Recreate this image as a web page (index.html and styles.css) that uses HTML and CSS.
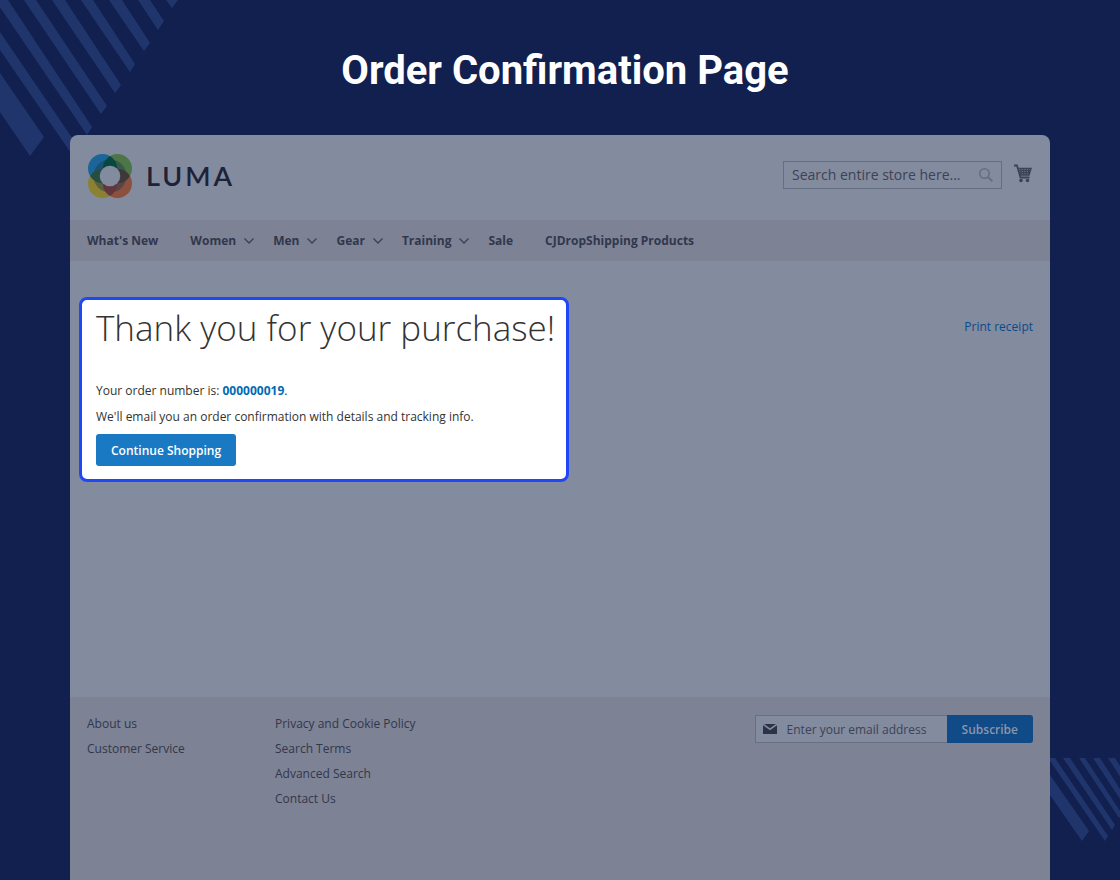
FILE: index.html
```html
<!DOCTYPE html>
<html lang="en">
<head>
    <meta charset="UTF-8">
    <meta name="viewport" content="width=device-width, initial-scale=1.0">
    <title>Order Confirmation Page</title>
    <link rel="stylesheet" href="styles.css">
</head>
<body>

<!-- Corner stripes -->
<svg class="stripes stripes-top" width="180" height="160" viewBox="0 0 180 160" aria-hidden="true">
    <path d="M0 73 44 137 30 156 0 112Z"/>
    <path d="M0 32 79 148 73 156 0 50Z"/>
    <path d="M-5 0H8L92 127 87 135Z"/>
    <path d="M24 0H36L107 106 101 114Z"/>
    <path d="M52 0H65L121 85 115 93Z"/>
    <path d="M81 0H93L135 64 130 72Z"/>
    <path d="M109 0H122L150 43 144 51Z"/>
    <path d="M138 0H150L164 21 158 30Z"/>
    <path d="M166 0H178L172 8Z"/>
</svg>
<svg class="stripes stripes-bottom" width="70" height="84" viewBox="0 0 70 84" aria-hidden="true">
    <path d="M0 17 39 73 32 83 0 37Z"/>
    <path d="M-2 0H5L58 78 55 83Z"/>
    <path d="M13 0H20L65 67 62 72Z"/>
    <path d="M29 0H35L72 56 69 60Z"/>
    <path d="M43 0H50L79 45 76 50Z"/>
    <path d="M58 0H65L85 32 80 34Z"/>
</svg>

<h1 class="page-title">Order Confirmation Page</h1>

<div class="store">
    <header class="header">
        <a class="logo" href="#">
            <svg width="44" height="46" viewBox="0 0 44 46" aria-hidden="true">
                <circle cx="14.5" cy="15.5" r="14.5" fill="#1b6698"/>
                <circle cx="29.5" cy="15.5" r="14.5" fill="#4d7648"/>
                <circle cx="14.5" cy="30.5" r="14.5" fill="#8b8132"/>
                <circle cx="29.5" cy="30.5" r="14.5" fill="#8c503f"/>
                <circle cx="22" cy="23" r="16.5" fill="#1d3550" fill-opacity=".45"/>
                <path d="M22 3A14.5 14.5 0 0 1 22 28A14.5 14.5 0 0 1 22 3" fill="#06483f"/>
                <path d="M2 23A14.5 14.5 0 0 1 27 23A14.5 14.5 0 0 1 2 23" fill="#264d42"/>
                <path d="M17 23A14.5 14.5 0 0 1 42 23A14.5 14.5 0 0 1 17 23" fill="#3f3838"/>
                <path d="M22 18A14.5 14.5 0 0 1 22 43A14.5 14.5 0 0 1 22 18" fill="#63363d"/>
                <circle cx="22" cy="23" r="10.3" fill="#838b9e"/>
            </svg>
            <span class="logo-text">LUMA</span>
        </a>
        <form class="search">
            <input type="search" aria-label="Search" placeholder="Search entire store here...">
            <button class="search-btn" type="button" aria-label="Search">
                <svg width="14" height="14" viewBox="0 0 14 14" fill="none" stroke="#666e83" stroke-width="1.6" aria-hidden="true">
                    <circle cx="5.5" cy="5.5" r="4.7"/>
                    <path d="M9 9 13.3 13.3" stroke-width="2"/>
                </svg>
            </button>
        </form>
        <a class="cart" href="#" aria-label="My Cart">
            <svg width="18" height="19" viewBox="0 0 18 19" fill="none" stroke="#3c4257" aria-hidden="true">
                <path d="M0 1.5H3L6.5 13.5H15.5" stroke-width="1.8"/>
                <path d="M4 4.5H17L15 11H6M4.5 6.6H16M5 8.8H15.5M7 4V11M9.6 4V11M12.2 4V11M14.6 4V11" stroke-width="1.4"/>
                <circle cx="7" cy="16.5" r="1.8" fill="#3c4257" stroke="none"/>
                <circle cx="13.5" cy="16.5" r="1.8" fill="#3c4257" stroke="none"/>
            </svg>
        </a>
    </header>

    <nav class="nav">
        <a href="#">What's New</a>
        <a class="has-menu" href="#">Women</a>
        <a class="has-menu" href="#">Men</a>
        <a class="has-menu" href="#">Gear</a>
        <a class="has-menu" href="#">Training</a>
        <a href="#">Sale</a>
        <a href="#">CJDropShipping Products</a>
    </nav>

    <main class="content">
        <section class="thanks">
            <h2>Thank you for your purchase!</h2>
            <p>Your order number is: <a href="#">000000019</a>.</p>
            <p>We'll email you an order confirmation with details and tracking info.</p>
            <button class="primary" type="button">Continue Shopping</button>
        </section>
        <a class="print" href="#">Print receipt</a>
    </main>

    <footer class="footer">
        <ul class="links">
            <li><a href="#">About us</a></li>
            <li><a href="#">Customer Service</a></li>
        </ul>
        <ul class="links">
            <li><a href="#">Privacy and Cookie Policy</a></li>
            <li><a href="#">Search Terms</a></li>
            <li><a href="#">Advanced Search</a></li>
            <li><a href="#">Contact Us</a></li>
        </ul>
        <form class="newsletter">
            <label class="email">
                <svg width="14" height="10" viewBox="0 0 14 10" fill="#2c3348" aria-hidden="true">
                    <path d="M1 0H13L7 4.2Z"/>
                    <path d="M0 1.2 7 6.2 14 1.2V10H0Z"/>
                </svg>
                <input type="email" aria-label="Email address" placeholder="Enter your email address">
            </label>
            <button type="button">Subscribe</button>
        </form>
    </footer>
</div>

<script>
// Add a chevron to every menu entry that opens a submenu
document.querySelectorAll('.has-menu').forEach(link => {
    link.insertAdjacentHTML('beforeend',
        '<svg width="10" height="6" viewBox="0 0 10 6" fill="none" stroke="#3c4257" stroke-width="1.4" aria-hidden="true"><path d="M.5.5 5 5 9.5.5"/></svg>');
});
</script>

</body>
</html>
```
FILE: styles.css
```css
/* Global Styles */
* {
    box-sizing: border-box;
}

body {
    display: flex;
    flex-direction: column;
    min-height: 100vh;
    margin: 0;
    background: #11204f;
    font-family: 'Open Sans', sans-serif;
    font-size: 12px;
    color: #31374c;
}

a {
    color: inherit;
    text-decoration: none;
}

input, button {
    margin: 0;
    padding: 0;
    border: 0;
    background: none;
    font-family: inherit;
    outline: none;
}

button {
    cursor: pointer;
}

/* Corner Stripes */
.stripes {
    position: absolute;
    fill: #21356d;
}

.stripes-top {
    top: 0;
    left: 0;
}

.stripes-bottom {
    top: 758px;
    right: 0;
}

/* Main Heading */
.page-title {
    margin: 0;
    padding: 47px 0 40px 10px;
    font-family: Roboto, sans-serif;
    font-size: 40px;
    line-height: 48px;
    font-weight: 700;
    text-align: center;
    color: #fff;
}

/* Store Window */
.store {
    position: relative;
    display: flex;
    flex-direction: column;
    flex: 1;
    margin: 0 70px;
    border-radius: 8px 8px 0 0;
    background: #838b9e;
    overflow: hidden;
}

/* Header */
.header {
    display: flex;
    align-items: center;
    height: 85px;
    padding: 0 18px 4px;
}

.logo {
    display: flex;
    align-items: center;
    gap: 14px;
    margin-right: auto;
}

.logo-text {
    font-family: Lato, sans-serif;
    font-size: 27px;
    line-height: 32px;
    font-weight: 600;
    letter-spacing: 3px;
    color: #1c2238;
}

.search {
    display: flex;
    align-items: center;
    width: 219px;
    height: 28px;
    padding: 0 8px;
    border: 1px solid #666e83;
    margin: 0 12px 2px 0;
}

.search input {
    flex: 1;
    min-width: 0;
    font-size: 14px;
}

.search-btn {
    display: flex;
}

.cart {
    display: flex;
    margin-bottom: 4px;
}

input::placeholder {
    color: #3c4257;
    opacity: 1;
}

/* Navigation */
.nav {
    display: flex;
    align-items: center;
    height: 41px;
    padding: 0 17px;
    background: #7d8295;
    font-weight: 700;
}

.nav a {
    display: flex;
    align-items: center;
    gap: 8px;
    padding-right: 32px;
}

.nav .has-menu {
    padding-right: 19px;
}

/* Content */
.content {
    display: flex;
    flex: 1;
    justify-content: space-between;
    align-items: flex-start;
    padding: 36px 17px 36px 9px;
}

.thanks {
    padding: 3px 11px 13px 14px;
    border: 3px solid #1f47f5;
    border-radius: 8px;
    background: #fff;
    color: #333;
}

.thanks h2 {
    margin: 0 0 29px;
    font-size: 35px;
    line-height: 50px;
    font-weight: 300;
}

.thanks p {
    margin: 0 0 8px;
    line-height: 18px;
}

.thanks p a {
    font-weight: 700;
    color: #006bb4;
}

.primary {
    height: 32px;
    padding: 0 15px;
    border-radius: 3px;
    background: #1979c3;
    font-size: 12px;
    font-weight: 600;
    color: #fff;
}

.print {
    padding-top: 21px;
    line-height: 18px;
    color: #0b4a89;
}

/* Footer */
.footer {
    display: flex;
    align-items: flex-start;
    min-height: 183px;
    padding: 18px 17px;
    background: #7d8295;
}

.links {
    display: flex;
    flex-direction: column;
    gap: 7px;
    min-width: 188px;
    margin: 0;
    padding: 0;
    list-style: none;
    line-height: 18px;
}

.newsletter {
    display: flex;
    margin-left: auto;
}

.email {
    display: flex;
    align-items: center;
    gap: 10px;
    width: 192px;
    height: 28px;
    padding: 0 7px;
    border: 1px solid #666e83;
    border-right: 0;
    background: #838b9e;
}

.email input {
    flex: 1;
    min-width: 0;
    font-size: 12px;
}

.newsletter button {
    height: 28px;
    padding: 0 15px;
    border-radius: 0 3px 3px 0;
    background: #104b87;
    font-size: 12px;
    font-weight: 600;
    color: #8b95ab;
}
```
